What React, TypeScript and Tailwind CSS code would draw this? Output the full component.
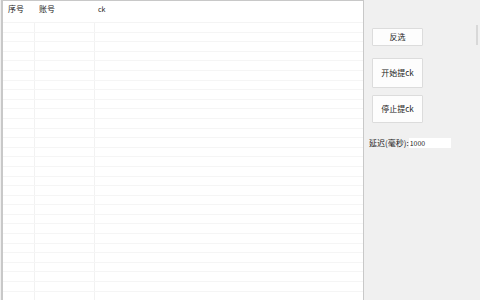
import React from 'react';

const rows = Array.from({ length: 29 });

const font = { fontFamily: '"Noto Sans CJK SC", "Liberation Sans", sans-serif' };

export default function App() {
  return (
    <div className="w-[480px] h-[300px] bg-[#f0f0f0] flex overflow-hidden text-[8px] text-[#222]" style={font}>
      {/* table */}
      <div className="w-[363px] h-[300px] bg-white border-l-2 border-t border-r border-[#c8c8c8] ml-[1px] flex flex-col overflow-hidden">
        <div className="flex h-[22px] shrink-0 items-start pt-[3px] border-b border-[#f4f4f4]">
          <div className="w-[32px] pl-[5px] leading-[10px]">序号</div>
          <div className="w-[60px] pl-[4px] leading-[10px]">账号</div>
          <div className="flex-1 pl-[3px] leading-[10px] text-[7px]">ck</div>
        </div>
        <div className="flex-1">
          {rows.map((_, i) => (
            <div key={i} className="flex h-[9.6px] border-b border-[#f5f5f5]">
              <div className="w-[32px] border-r border-[#f2f2f2]" />
              <div className="w-[60px] border-r border-[#f2f2f2]" />
              <div className="flex-1" />
            </div>
          ))}
        </div>
      </div>

      {/* side panel */}
      <div className="flex-1 flex flex-col pt-[28px] pl-[5px] relative">
        <button className="ml-[3px] w-[51px] h-[18px] bg-[#fdfdfd] border border-[#dcdcdc] rounded-[1px] text-[8px] text-[#222] leading-none">反选</button>
        <button className="ml-[3px] mt-[12px] w-[51px] h-[30px] bg-[#fdfdfd] border border-[#dcdcdc] rounded-[1px] text-[8px] text-[#222] leading-none">开始提ck</button>
        <button className="ml-[3px] mt-[7px] w-[51px] h-[28px] bg-[#fdfdfd] border border-[#dcdcdc] rounded-[1px] text-[8px] text-[#222] leading-none">停止提ck</button>
        <div className="mt-[15px] flex items-center h-[10px]">
          <span className="leading-none whitespace-nowrap">延迟(毫秒):</span>
          <input
            defaultValue="1000"
            className="ml-[0px] w-[42px] h-[10px] bg-white border-0 outline-none text-[7px] text-[#222] leading-none px-[1px]"
            style={font}
          />
        </div>
        <div className="absolute right-[2px] top-[25px] w-[2px] h-[20px] bg-[#d8d8d8]" />
      </div>
    </div>
  );
}
